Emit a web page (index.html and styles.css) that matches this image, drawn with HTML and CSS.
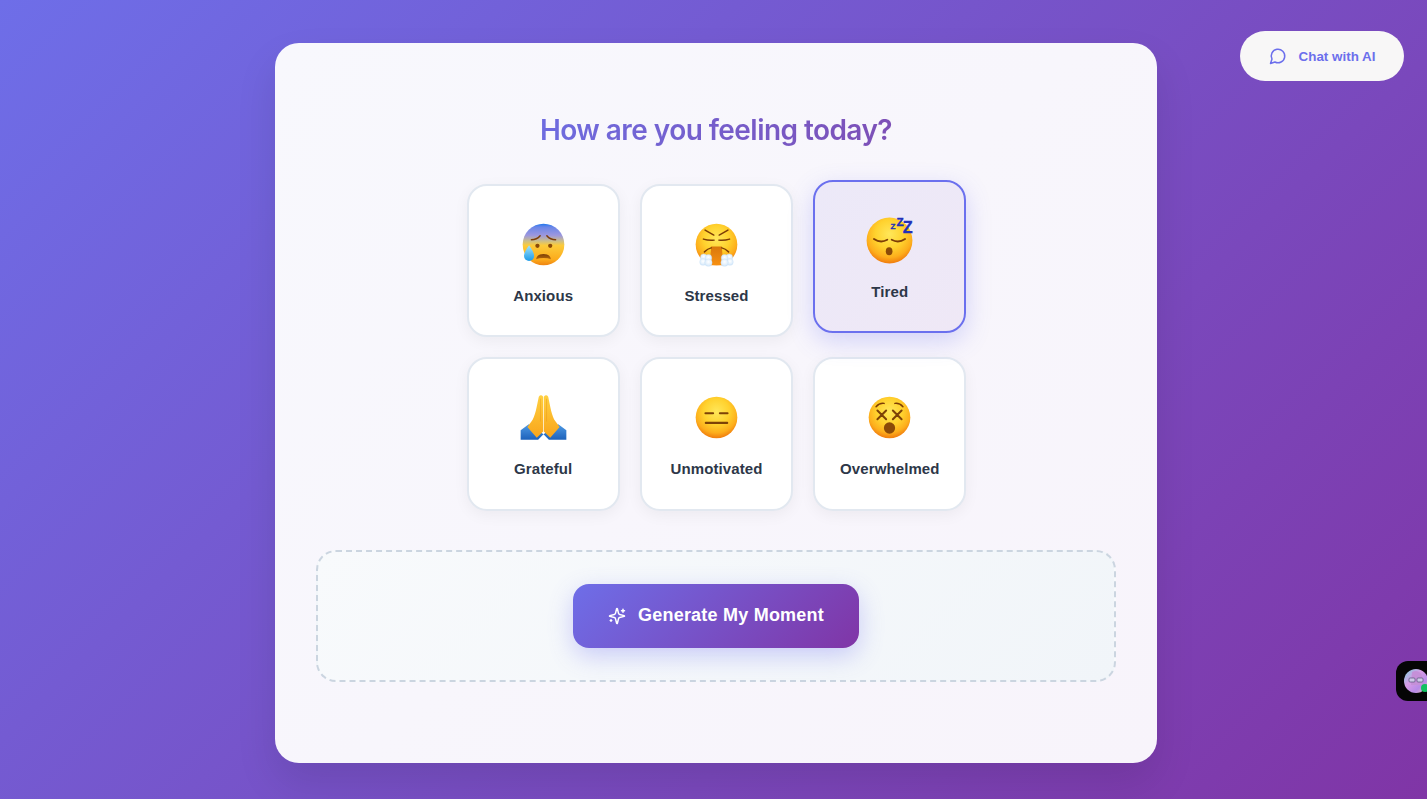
FILE: index.html
```html
<!DOCTYPE html>
<html lang="en">
<head>
<meta charset="utf-8">
<title>How are you feeling today?</title>
<link rel="stylesheet" href="styles.css">
</head>
<body>
<svg class="defs" aria-hidden="true">
  <defs>
    <radialGradient id="face" cx="50%" cy="36%" r="62%">
      <stop offset="0" stop-color="#ffe75a"/>
      <stop offset=".5" stop-color="#ffd22e"/>
      <stop offset=".82" stop-color="#fdae1c"/>
      <stop offset="1" stop-color="#f28310"/>
    </radialGradient>
    <linearGradient id="cold" x1="0" y1="0" x2="0" y2="1">
      <stop offset="0" stop-color="#1f78ee"/>
      <stop offset=".08" stop-color="#6a86e8"/>
      <stop offset=".28" stop-color="#9c97de"/>
      <stop offset=".42" stop-color="#cdbf86"/>
      <stop offset=".52" stop-color="#fccb3a"/>
      <stop offset=".86" stop-color="#fcab1c"/>
      <stop offset="1" stop-color="#ef8412"/>
    </linearGradient>
    <linearGradient id="drop" x1="0" y1="0" x2="0" y2="1">
      <stop offset="0" stop-color="#a5e4fc"/>
      <stop offset="1" stop-color="#1d9be8"/>
    </linearGradient>
    <linearGradient id="hand" x1="0" y1="0" x2="0" y2="1">
      <stop offset="0" stop-color="#ffd040"/>
      <stop offset="1" stop-color="#f9a51a"/>
    </linearGradient>
    <linearGradient id="sleeve" x1="0" y1="0" x2="0" y2="1">
      <stop offset="0" stop-color="#4f9ae4"/>
      <stop offset="1" stop-color="#1d62bb"/>
    </linearGradient>
    <radialGradient id="puff" cx="50%" cy="40%" r="60%">
      <stop offset="0" stop-color="#ffffff"/>
      <stop offset="1" stop-color="#d2e7fa"/>
    </radialGradient>
    <linearGradient id="breath" x1="0" y1="0" x2="0" y2="1">
      <stop offset="0" stop-color="#d9780c"/>
      <stop offset="1" stop-color="#f79012"/>
    </linearGradient>
    <linearGradient id="mouth" x1="0" y1="0" x2="0" y2="1">
      <stop offset="0" stop-color="#7a3d06"/>
      <stop offset="1" stop-color="#b5690d"/>
    </linearGradient>
  </defs>
</svg>

<a class="chat" href="#">
  <svg class="chat-icon" viewBox="0 0 24 24" aria-hidden="true"><path d="M7.900 20A9 9 0 1 0 4 16.100L2 22Z"/></svg>
  <span>Chat with AI</span>
</a>

<main class="card">
  <h1 class="title">How are you feeling today?</h1>

  <div class="moods">
    <button class="mood">
      <svg class="emoji" viewBox="0 0 64 64" aria-hidden="true">
        <circle cx="32" cy="32" r="31" fill="url(#cold)"/>
        <path d="M14 25q8 0 13-6M50 25q-8 0-13-6" class="brow"/>
        <circle cx="23" cy="34" r="3.200" fill="#8a4a08"/>
        <circle cx="42" cy="34" r="3.200" fill="#8a4a08"/>
        <path d="M21 54q1-8 11-8t11 8q-4-2-11-2t-11 2z" fill="url(#mouth)"/>
        <path d="M10.500 33q7.500 10 7.500 16a7.500 7.500 0 0 1-15 0q0-6 7.500-16z" fill="url(#drop)"/>
      </svg>
      <span class="label">Anxious</span>
    </button>
    <button class="mood">
      <svg class="emoji" viewBox="0 0 64 64" aria-hidden="true">
        <circle cx="32" cy="32" r="31" fill="url(#face)"/>
        <path d="M15 10.500l13 7.500M49 10.500l-13 7.500" class="brow"/>
        <path d="M12.500 24q8 2.500 16 1.500M51.500 24q-8 2.500-16 1.500" class="brow"/>
        <path d="M24 35h16l2 28H22z" fill="url(#breath)"/>
        <path d="M14 43q5-5 10-6M50 43q-5-5-10-6" class="brow"/>
        <g fill="url(#puff)" stroke="#c4dff7" stroke-width=".5">
          <circle cx="13" cy="51" r="5"/><circle cx="20" cy="52" r="5"/><circle cx="12" cy="58" r="5"/><circle cx="20" cy="59" r="5.500"/>
          <circle cx="51" cy="51" r="5"/><circle cx="44" cy="52" r="5"/><circle cx="52" cy="58" r="5"/><circle cx="44" cy="59" r="5.500"/>
        </g>
      </svg>
      <span class="label">Stressed</span>
    </button>
    <button class="mood is-selected">
      <svg class="emoji" viewBox="0 0 64 64" aria-hidden="true">
        <circle cx="32" cy="32" r="31" fill="url(#face)"/>
        <path d="M11 30q9 6 18 1M53 30q-9 6-18 1" class="lid"/>
        <ellipse cx="31.500" cy="46.500" rx="4.500" ry="5.400" fill="#8a4a08"/>
        <text class="zzz" x="33.500" y="16.500" font-size="11">Z</text>
        <text class="zzz" x="41.500" y="12.500" font-size="16">Z</text>
        <text class="zzz" x="50" y="21.500" font-size="22">Z</text>
      </svg>
      <span class="label">Tired</span>
    </button>
    <button class="mood">
      <svg class="emoji" viewBox="0 0 64 64" aria-hidden="true">
        <path d="M-2 65V51L10 42 32 57 24 65zM66 65V51L54 42 32 57 40 65z" fill="url(#sleeve)"/>
        <path d="M31.500 1Q28-3 25 1C22 15 20 30 14 38Q11 42 8 46L22 62 31.500 53Z" fill="url(#hand)"/>
        <path d="M32.500 1Q36-3 39 1C42 15 44 30 50 38Q53 42 56 46L42 62 32.500 53Z" fill="url(#hand)"/>
        <path d="M27.500 4V38M36.500 4V38" stroke="#ea9a1c" stroke-width=".7" fill="none"/>
      </svg>
      <span class="label">Grateful</span>
    </button>
    <button class="mood">
      <svg class="emoji" viewBox="0 0 64 64" aria-hidden="true">
        <circle cx="32" cy="32" r="31" fill="url(#face)"/>
        <path d="M15.500 25.500h11.500M37 25.500h11.500" class="bar"/>
        <path d="M16 40h32" class="bar"/>
      </svg>
      <span class="label">Unmotivated</span>
    </button>
    <button class="mood">
      <svg class="emoji" viewBox="0 0 64 64" aria-hidden="true">
        <circle cx="32" cy="32" r="31" fill="url(#face)"/>
        <path d="M12 16q5-6 12-5M52 16q-5-6-12-5" class="brow"/>
        <path d="M14 21.500l13 13M27 21.500l-13 13M37 21.500l13 13M50 21.500l-13 13" class="bar"/>
        <ellipse cx="32" cy="47.500" rx="8.400" ry="8.500" fill="#8a4a08"/>
      </svg>
      <span class="label">Overwhelmed</span>
    </button>
  </div>

  <section class="generate">
    <button class="generate-btn">
      <svg class="spark" viewBox="0 0 24 24" aria-hidden="true">
        <path d="M9.937 15.500A2 2 0 0 0 8.500 14.063l-6.135-1.582a.5.5 0 0 1 0-.962L8.500 9.936A2 2 0 0 0 9.937 8.500l1.582-6.135a.5.5 0 0 1 .963 0L14.063 8.500A2 2 0 0 0 15.500 9.937l6.135 1.581a.5.5 0 0 1 0 .964L15.500 14.063a2 2 0 0 0-1.437 1.437l-1.582 6.135a.5.5 0 0 1-.963 0z"/>
        <path d="M20 3v4M22 5h-4M4 17v2M5 18H3"/>
      </svg>
      <span>Generate My Moment</span>
    </button>
  </section>
</main>

<div class="widget" aria-hidden="true">
  <svg class="avatar" viewBox="0 0 24 24">
    <circle cx="12" cy="12" r="12" fill="url(#avatar-bg)"/>
    <defs>
      <linearGradient id="avatar-bg" x1="0" y1="0" x2="1" y2="1">
        <stop offset="0" stop-color="#7fd6e0"/>
        <stop offset=".4" stop-color="#d79be6"/>
        <stop offset=".7" stop-color="#b78be8"/>
        <stop offset="1" stop-color="#f2c2b0"/>
      </linearGradient>
    </defs>
    <path d="M8 3q6-3 10 3l1 10H7z" fill="#c590d8"/>
    <rect x="5" y="9" width="6" height="4" rx="1" fill="#cfc8e8" stroke="#55507a" stroke-width=".7"/>
    <rect x="13" y="9" width="6" height="4" rx="1" fill="#cfc8e8" stroke="#55507a" stroke-width=".7"/>
  </svg>
  <span class="dot"></span>
</div>
</body>
</html>
```
FILE: styles.css
```css
* { box-sizing: border-box; }
html, body { height: 100%; }
body {
  margin: 0;
  padding: 43px 270px 36px 275px;
  display: flex;
  overflow: hidden;
  font-family: "Liberation Sans", Arial, sans-serif;
  background: linear-gradient(135deg, #6e6ee8 0%, #8035a6 100%);
}
.defs { position: absolute; width: 0; height: 0; }

.card {
  flex: 1;
  display: flex;
  flex-direction: column;
  align-items: center;
  padding-top: 70px;
  border-radius: 24px;
  background: linear-gradient(135deg, #f8f8fd, #f8f4fb);
  box-shadow: 0 20px 40px rgba(0, 0, 0, .1);
}
.title {
  margin: 0 0 37px;
  font: 600 28px/34px Inter, "Liberation Sans", sans-serif;
  letter-spacing: -.56px;
  background: linear-gradient(100deg, #6e6ce0, #7d4fb6);
  -webkit-background-clip: text;
  background-clip: text;
  color: transparent;
}

.moods {
  width: 500px;
  margin-left: 1px;
  display: grid;
  grid-template-columns: repeat(3, 1fr);
  gap: 20px;
}
.mood {
  aspect-ratio: 1;
  display: flex;
  flex-direction: column;
  align-items: center;
  justify-content: center;
  gap: 21px;
  padding: 7px 0 0;
  background: #fff;
  border: 2px solid #e2e8f0;
  border-radius: 20px;
  box-shadow: 0 4px 15px rgba(0, 0, 0, .05);
  font-family: inherit;
}
.mood.is-selected {
  transform: translateY(-4px);
  background: linear-gradient(135deg, #ece9f8, #efe8f6);
  border-color: #6b70ee;
  box-shadow: 0 8px 25px rgba(99, 102, 241, .25);
}
.emoji { width: 43px; height: 43px; display: block; overflow: visible; }
.is-selected .emoji { transform: scale(1.1); }
.label { font-size: 15px; line-height: 18px; font-weight: 700; letter-spacing: .1px; color: #2d3748; }

.brow, .lid { fill: none; stroke: #7d3d06; stroke-width: 2.2; stroke-linecap: round; }
.lid { stroke-width: 2.6; }
.bar { fill: none; stroke: #7d4206; stroke-width: 3; stroke-linecap: round; }
.zzz { font-family: "Liberation Sans", sans-serif; font-weight: 700; fill: #2230b8; stroke: #2230b8; stroke-width: .4; }

.generate {
  width: 800px;
  height: 132px;
  margin-top: 39px;
  display: flex;
  align-items: center;
  justify-content: center;
  border: 2px dashed #cbd5e0;
  border-radius: 20px;
  background: linear-gradient(135deg, #f8fafc, #f1f5f9);
}
.generate-btn {
  width: 286px;
  height: 64px;
  display: flex;
  align-items: center;
  justify-content: center;
  gap: 12px;
  border: 0;
  border-radius: 16px;
  color: #fff;
  font: 700 18px "Liberation Sans", Arial, sans-serif;
  letter-spacing: .22px;
  background: linear-gradient(135deg, #6e6ee8, #8035a6);
  box-shadow: 0 8px 25px rgba(99, 102, 241, .3);
}
.spark { width: 18px; height: 18px; fill: none; stroke: #fff; stroke-width: 2; stroke-linecap: round; stroke-linejoin: round; }

.chat {
  position: fixed;
  top: 31px;
  right: 23px;
  width: 164px;
  height: 50px;
  display: flex;
  align-items: center;
  justify-content: center;
  gap: 12px;
  border-radius: 25px;
  background: #f8f7f7;
  color: #6c6fec;
  font-size: 13.4px;
  font-weight: 700;
  text-decoration: none;
}
.chat-icon { width: 18px; height: 18px; fill: none; stroke: #6c6fec; stroke-width: 2; stroke-linecap: round; stroke-linejoin: round; }

.widget {
  position: fixed;
  top: 661px;
  left: 1396px;
  width: 60px;
  height: 40px;
  border-radius: 12px;
  background: #050505;
}
.avatar {
  position: absolute;
  top: 8px;
  left: 8px;
  width: 24px;
  height: 24px;
}
.dot {
  position: absolute;
  top: 23px;
  left: 25px;
  width: 8px;
  height: 8px;
  border-radius: 50%;
  background: #10c060;
}
```
